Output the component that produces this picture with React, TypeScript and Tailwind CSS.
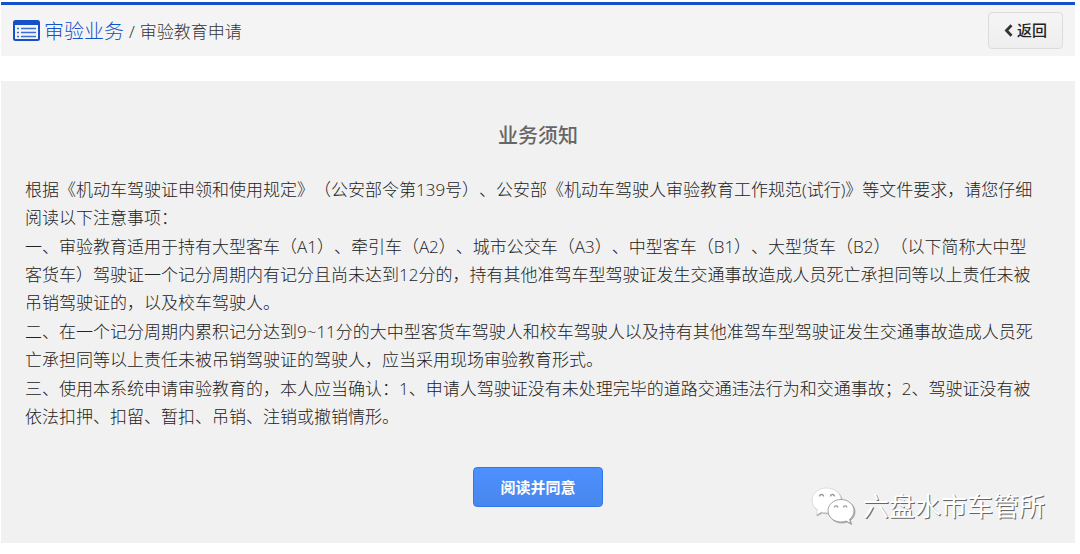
import React from 'react';

const paragraphs: string[] = [
  '根据《机动车驾驶证申领和使用规定》（公安部令第139号）、公安部《机动车驾驶人审验教育工作规范(试行)》等文件要求，请您仔细阅读以下注意事项：',
  '一、审验教育适用于持有大型客车（A1）、牵引车（A2）、城市公交车（A3）、中型客车（B1）、大型货车（B2）（以下简称大中型客货车）驾驶证一个记分周期内有记分且尚未达到12分的，持有其他准驾车型驾驶证发生交通事故造成人员死亡承担同等以上责任未被吊销驾驶证的，以及校车驾驶人。',
  '二、在一个记分周期内累积记分达到9~11分的大中型客货车驾驶人和校车驾驶人以及持有其他准驾车型驾驶证发生交通事故造成人员死亡承担同等以上责任未被吊销驾驶证的驾驶人，应当采用现场审验教育形式。',
  '三、使用本系统申请审验教育的，本人应当确认：1、申请人驾驶证没有未处理完毕的道路交通违法行为和交通事故；2、驾驶证没有被依法扣押、扣留、暂扣、吊销、注销或撤销情形。',
];

function ListIcon() {
  return (
    <svg width="27" height="21" viewBox="0 0 27 21" fill="none" aria-hidden="true">
      <rect x="1" y="1" width="25" height="19" rx="1.5" fill="#f4f4f4" stroke="#1450c8" strokeWidth="2" />
      <path d="M1 1h25v4H1z" fill="#1450c8" />
      <path d="M4 8.500h2M4 12.500h2M4 16.500h2M8 8.500h15M8 12.500h15M8 16.500h15" stroke="#3a6cd2" strokeWidth="1.500" />
    </svg>
  );
}

function ChevronIcon() {
  return (
    <svg width="9" height="13" viewBox="0 0 9 13" fill="none" aria-hidden="true">
      <path d="M7.5 1.3 2.5 6.5l5 5.2" stroke="#333" strokeWidth="2.8" />
    </svg>
  );
}

function ChatIcon() {
  return (
    <svg
      width="44"
      height="38"
      viewBox="0 0 44 38"
      className="drop-shadow-[1px_1px_0px_#aaaaaa]"
      aria-hidden="true"
    >
      <path
        d="M15.5 1C7.5 1 1 6.5 1 13.400c0 4 2.100 7.300 5.500 9.600L5 28l5.500-3c2 .6 3.500.9 5.700.9 8 0 14-5.500 14-12.500S23.500 1 15.500 1z"
        fill="#fff" stroke="#d2d2d2" strokeWidth=".7"
      />
      <path
        d="M30 12.500c-7.300 0-13 5-13 11.300S22.700 35 30 35c1.900 0 3.600-.4 5.200-.9l4.600 2.500-1.300-4.200c2.900-2.100 4.500-5.100 4.500-8.600 0-6.300-5.700-11.300-13-11.300z"
        fill="#fff" stroke="#999" strokeWidth=".9"
      />
      <path
        d="M8.500 9.500a2 2 0 0 1 4 0M19.500 9.500a2 2 0 0 1 4 0M23.500 20.500a1.700 1.700 0 0 1 3.400 0M32.500 20.500a1.700 1.700 0 0 1 3.400 0"
        fill="none" stroke="#999" strokeWidth="1.300"
      />
    </svg>
  );
}

export default function App() {
  return (
    <div
      lang="zh-CN"
      className="mt-0.5 mr-[5px] ml-px bg-white font-['Open_Sans','Noto_Sans_CJK_SC',sans-serif] text-[#222] [text-spacing-trim:space-all]"
    >
      <header className="flex h-[54px] items-center justify-between border-t-3 border-[#1450c8] bg-[#f4f4f4] px-3">
        <nav className="flex items-center whitespace-nowrap" aria-label="当前位置">
          <ListIcon />
          <a href="#business" className="ml-1 pt-0.5 text-[20px] leading-7 font-light text-[#1450c8]">审验业务</a>
          <span className="mx-[5px] pt-0.5 text-[17px] font-light text-[#222]">/</span>
          <span className="pt-0.5 text-[17px] leading-7 font-light text-[#333]">审验教育申请</span>
        </nav>
        <button
          type="button"
          className="mb-px flex h-[37px] w-[75px] items-center justify-center gap-1 rounded-[4px] border border-[#dcdcdc] bg-linear-to-b from-[#f5f5f5] to-[#eeeeee] text-[15px] font-medium"
        >
          <ChevronIcon />
          返回
        </button>
      </header>

      <main className="relative mt-[25px] bg-[#f1f1f1] px-6 pt-10 pb-9">
        <h1 className="text-center text-[20px] leading-[30px] font-medium text-[#666]">业务须知</h1>
        <div className="mt-[25px] mr-[14px] flex flex-col gap-px text-[17px] leading-7 font-light">
          {paragraphs.map((text) => (
            <p key={text}>{text}</p>
          ))}
        </div>
        <div className="mt-9 flex justify-center">
          <button
            type="button"
            className="h-10 rounded-[4px] border border-[#3079ed] bg-linear-to-b from-[#4d90fe] to-[#4787ed] px-[26px] text-[15px] font-bold text-white"
          >
            阅读并同意
          </button>
        </div>
        <div className="absolute right-[30px] bottom-[18px] flex items-center gap-2 text-[26px] leading-[38px] whitespace-nowrap text-white [text-shadow:1px_1px_0_#666]">
          <ChatIcon />
          <span>六盘水市车管所</span>
        </div>
      </main>
    </div>
  );
}
